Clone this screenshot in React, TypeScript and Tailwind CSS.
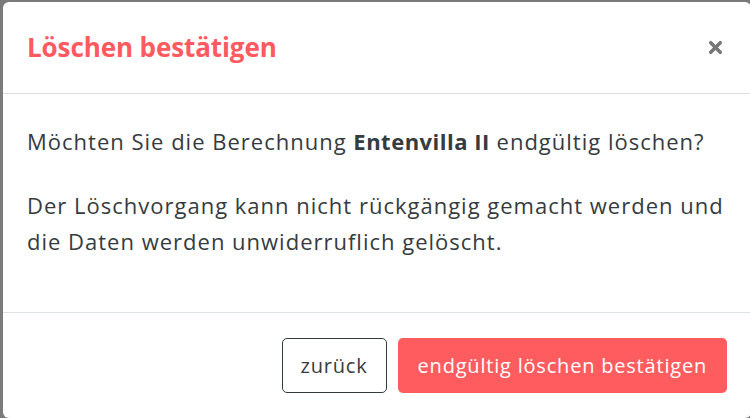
import React from 'react';
import { X } from 'lucide-react';

const App: React.FC = () => {
    return (
        <div className="w-[750px] h-[418px] bg-[#7b7b7b] pl-[3px] pt-[2px] overflow-hidden" style={{ fontFamily: '"Open Sans", "Noto Sans", sans-serif' }}>
            <div className="w-[748px] h-[416px] bg-white rounded-md flex flex-col">
                {/* Header */}
                <div className="h-[92px] px-6 flex items-center justify-between border-b border-[#dee2e6]">
                    <h3 className="text-[26px] font-bold text-[#ff5a5f] tracking-[-0.1px]">Löschen bestätigen</h3>
                    <button className="text-[#777] mr-[2px]">
                        <X className="w-[19px] h-[19px]" strokeWidth={4.5} />
                    </button>
                </div>

                {/* Body */}
                <div className="h-[219px] px-6 pt-[29px] border-b border-[#dee2e6] text-[22px] tracking-[1px] leading-[36px] text-[#363b40]">
                    <p className="mb-[28px]">
                        Möchten Sie die Berechnung <strong className="font-bold tracking-[0.5px]">Entenvilla II</strong> endgültig löschen?
                    </p>
                    <p>
                        Der Löschvorgang kann nicht rückgängig gemacht werden und die Daten werden unwiderruflich gelöscht.
                    </p>
                </div>

                {/* Footer */}
                <div className="flex-1 px-6 flex items-start justify-end gap-[11px] pt-[25px] text-[20px] tracking-[0.8px]">
                    <button className="h-[55px] px-[18px] border border-[#343a40] rounded-[5px] text-[#363b40]">
                        zurück
                    </button>
                    <button className="h-[55px] px-[20px] rounded-[5px] bg-[#ff5c5f] text-white">
                        endgültig löschen bestätigen
                    </button>
                </div>
            </div>
        </div>
    );
};

export default App;
